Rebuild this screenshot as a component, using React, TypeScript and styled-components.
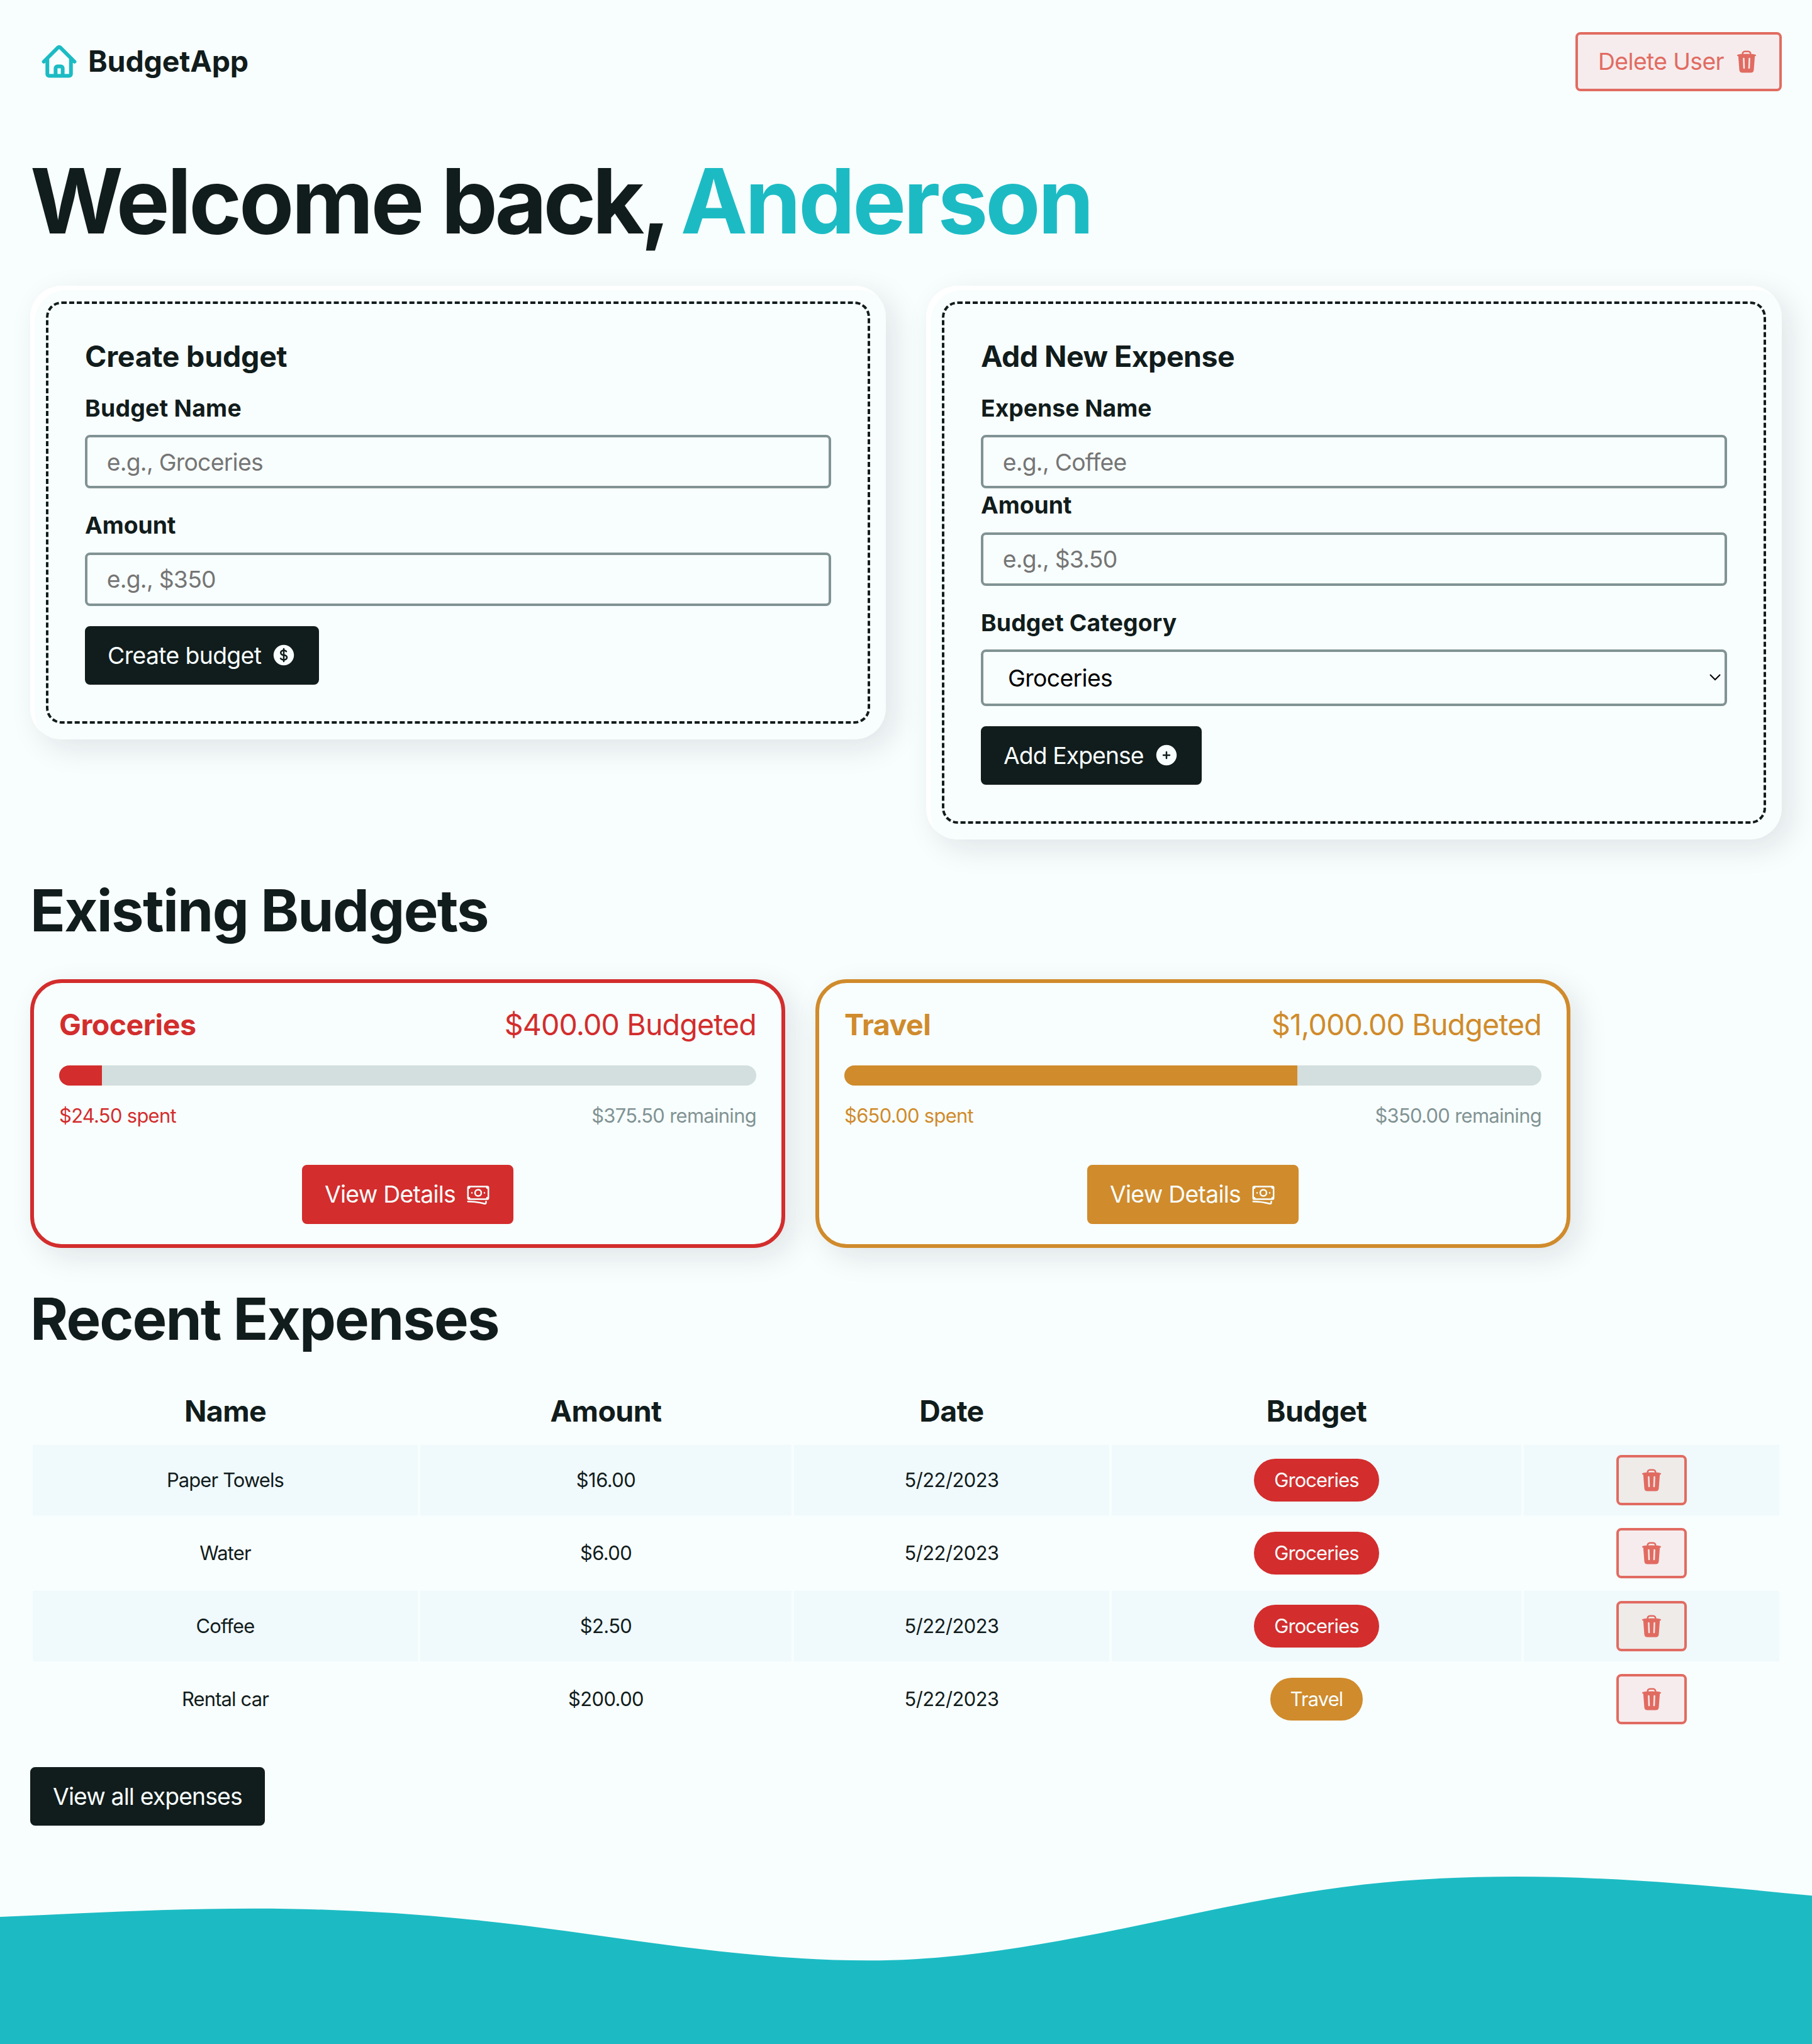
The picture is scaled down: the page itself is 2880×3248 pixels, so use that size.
import React from "react";
import styled, { createGlobalStyle, css } from "styled-components";
import { HiTrash, HiCurrencyDollar, HiPlusCircle, HiOutlineBanknotes } from "react-icons/hi2";

const theme = {
  bg: "#f8fefd",
  text: "#111c1c",
  accent: "#1cbbc4",
  muted: "#819394",
  track: "#d3dede",
  tint: "#f0f9fc",
  warning: "#e16b61",
  warningBg: "#f6eced",
  warningBgTinted: "#eeebe9",
  red: "#d32d2d",
  orange: "#d08b2c",
  shadow: "14px 14px 48px rgba(20, 10, 50, 0.105)",
};

const GlobalStyle = createGlobalStyle`
  *, *::before, *::after { box-sizing: border-box; }
  body {
    margin: 0;
    background: ${theme.bg};
    color: ${theme.text};
    font-family: Inter, "Liberation Sans", sans-serif;
    font-size: 37.3px;
    line-height: 57.6px;
  }
  h1, h2, h3, p { margin: 0; }
  svg { display: block; flex: none; }
`;

const Page = styled.div`
  display: flex;
  flex-direction: column;
  min-height: 3248px;
`;

const Main = styled.main`
  display: flex;
  flex-direction: column;
  padding: 51px 48px 0;
`;

const Nav = styled.nav`
  display: flex;
  align-items: center;
  justify-content: space-between;
`;

const Brand = styled.a`
  display: flex;
  align-items: center;
  gap: 16px;
  padding-left: 16px;
  font-size: 46.5px;
  font-weight: 700;
  letter-spacing: -0.0035em;
`;

const buttonBase = css<{ $spacing?: number }>`
  display: inline-flex;
  align-items: center;
  justify-content: center;
  gap: 16px;
  padding: 14px 32px;
  border: 4px solid transparent;
  border-radius: 8px;
  font: inherit;
  line-height: 57.6px;
  letter-spacing: ${(p) => p.$spacing ?? -0.0165}em;
  white-space: nowrap;
`;

const Button = styled.button<{ $color?: string; $spacing?: number }>`
  ${buttonBase}
  align-self: flex-start;
  background: ${(p) => p.$color ?? theme.text};
  border-color: ${(p) => p.$color ?? theme.text};
  color: ${theme.bg};
`;

const WarningButton = styled.button<{ $compact?: boolean; $spacing?: number }>`
  ${buttonBase}
  background: ${theme.warningBg};
  border-color: ${theme.warning};
  color: ${theme.warning};
  ${(p) => p.$compact && css`
    padding: 16px 32px;
    line-height: 40px;
    vertical-align: middle;
  `}
`;

const Welcome = styled.h1`
  margin: 94px 0 55px;
  font-size: 142.6px;
  line-height: 160px;
  letter-spacing: -0.0285em;
  word-spacing: 1px;
`;

const TightWord = styled.span`
  letter-spacing: -0.041em;
  word-spacing: -2px;
`;

const Accent = styled.span`
  letter-spacing: -0.0273em;
  color: ${theme.accent};
`;

const FormGrid = styled.section`
  display: grid;
  grid-template-columns: 1fr 1fr;
  align-items: start;
  gap: 64px;
`;

const FormCard = styled.div`
  padding: 87px;
  border-radius: 50px;
  background: ${theme.bg};
  box-shadow: inset 7px 7px 0 #fff, ${theme.shadow};
  outline: 4px dashed ${theme.text};
  outline-offset: -29px;
`;

const CardTitle = styled.h2<{ $spacing: number }>`
  margin-bottom: 31px;
  font-size: 46.5px;
  line-height: 50px;
  letter-spacing: ${(p) => p.$spacing}em;
`;

const Form = styled.form`
  display: flex;
  flex-direction: column;
  gap: 32px;
`;

const FieldStack = styled.div`
  display: flex;
  flex-direction: column;
`;

const Label = styled.label<{ $spacing?: number }>`
  margin-bottom: 15px;
  font-weight: 700;
  line-height: 54.5px;
  letter-spacing: ${(p) => p.$spacing ?? 0.004}em;
`;

const Input = styled.input`
  width: 100%;
  height: 85px;
  padding: 1px 30.7px 0;
  border: 4px solid ${theme.muted};
  border-radius: 8px;
  background: transparent;
  font: inherit;
  letter-spacing: -0.0195em;
  &::placeholder { color: #757575; opacity: 1; }
`;

const SelectBox = styled.div`
  display: grid;
  align-items: center;
  > * { grid-area: 1 / 1; }
  > svg { justify-self: end; margin: 0 9px 2px 0; pointer-events: none; }
`;

const Select = styled.select`
  appearance: none;
  width: 100%;
  height: 89.5px;
  padding: 1px 39px 0;
  border: 4px solid ${theme.muted};
  border-radius: 8px;
  background: transparent;
  color: #000;
  font: inherit;
  letter-spacing: -0.0168em;
`;

const SectionTitle = styled.h2<{ $gap: number; $spacing: number }>`
  margin: 60px 0 ${(p) => p.$gap}px;
  font-size: 92px;
  line-height: 106px;
  letter-spacing: ${(p) => p.$spacing}em;
`;

const Budgets = styled.section`
  display: flex;
  gap: 48px;
`;

const BudgetCard = styled.article<{ $color: string }>`
  display: flex;
  flex-direction: column;
  width: 1200px;
  padding: 30px 40px 32.4px;
  border: 6px solid ${(p) => p.$color};
  border-radius: 50px;
  background: ${theme.bg};
  box-shadow: ${theme.shadow};
  color: ${(p) => p.$color};
  > button { align-self: center; margin-top: 54px; }
`;

const BudgetHead = styled.div`
  display: flex;
  justify-content: space-between;
  font-size: 46.5px;
  line-height: 72px;
`;

const BudgetName = styled.h3`
  font-size: inherit;
  letter-spacing: -0.0105em;
`;

const BudgetAmount = styled.p`
  letter-spacing: -0.018em;
`;

const Track = styled.div`
  height: 32px;
  margin: 29px 0 24px;
  border-radius: 16px;
  background: ${theme.track};
  overflow: hidden;
`;

const Fill = styled.div<{ $color: string }>`
  height: 100%;
  background: ${(p) => p.$color};
`;

const BudgetFoot = styled.div`
  display: flex;
  justify-content: space-between;
  font-size: 30.9px;
  line-height: 48px;
  letter-spacing: -0.022em;
`;

const Remaining = styled.span`
  color: ${theme.muted};
`;

const Table = styled.table`
  width: 2784px;
  table-layout: fixed;
  border-collapse: separate;
  border-spacing: 4px;
  margin-bottom: 48px;
  text-align: center;
`;

const HeadCell = styled.th<{ $width: number }>`
  width: ${(p) => p.$width}px;
  height: 98px;
  padding: 1px 0 0;
  font-size: 46.5px;
  letter-spacing: -0.013em;
`;

const Row = styled.tr`
  &:nth-child(odd) { background: ${theme.tint}; }
  &:nth-child(odd) ${WarningButton} { background: ${theme.warningBgTinted}; }
`;

const Cell = styled.td`
  height: 112px;
  padding: 0;
  font-size: 30.9px;
  line-height: 48px;
  letter-spacing: -0.0275em;
  vertical-align: middle;
`;

const NumberCell = styled(Cell)`
  letter-spacing: -0.018em;
`;

const Pill = styled.a<{ $color: string }>`
  display: inline-flex;
  align-items: center;
  height: 68px;
  padding: 0 32px;
  border-radius: 34px;
  background: ${(p) => p.$color};
  color: ${theme.bg};
  vertical-align: middle;
`;

const Footer = styled.footer`
  margin-top: auto;
  height: 268px;
`;

const HomeIcon = () => (
  <svg width="60" height="60" viewBox="0 0 24 24" fill="none" stroke={theme.accent} strokeWidth="2.4" strokeLinecap="round" strokeLinejoin="round">
    <path d="m2.25 12 8.954-8.955c.44-.439 1.152-.439 1.591 0L21.75 12M4.5 9.75v10.125c0 .621.504 1.125 1.125 1.125H9.75v-4.875c0-.621.504-1.125 1.125-1.125h2.25c.621 0 1.125.504 1.125 1.125V21h4.125c.621 0 1.125-.504 1.125-1.125V9.75M8.25 21h8.25" />
  </svg>
);

const Chevron = () => (
  <svg width="20" height="14" viewBox="0 0 20 14" fill="none" stroke="#000" strokeWidth="2">
    <path d="M2 3l8 8 8-8" />
  </svg>
);

// Knots of the footer wave: x, y and the slope of the curve there.
const crest: [number, number, number][] = [
  [0, 66, -0.043],
  [404, 52.7, 0],
  [900, 88.5, 0.14],
  [1381, 135.3, 0],
  [1855, 70, -0.21],
  [2168, 14.5, -0.112],
  [2410, 2, 0],
  [2880, 32.3, 0.1],
];

const wavePath = () => {
  let d = `M0 ${crest[0][1]}`;
  for (let i = 1; i < crest.length; i++) {
    const [x0, y0, s0] = crest[i - 1];
    const [x1, y1, s1] = crest[i];
    const h = (x1 - x0) / 3;
    d += `C${x0 + h} ${y0 + s0 * h} ${x1 - h} ${y1 - s1 * h} ${x1} ${y1}`;
  }
  return `${d}V268H0Z`;
};

const budgets = [
  { name: "Groceries", color: theme.red, total: "$400.00", spent: "$24.50", left: "$375.50", ratio: 0.06125 },
  { name: "Travel", color: theme.orange, total: "$1,000.00", spent: "$650.00", left: "$350.00", ratio: 0.65 },
];

const expenses = [
  { name: "Paper Towels", amount: "$16.00", budget: "Groceries" },
  { name: "Water", amount: "$6.00", budget: "Groceries" },
  { name: "Coffee", amount: "$2.50", budget: "Groceries" },
  { name: "Rental car", amount: "$200.00", budget: "Travel" },
];

const columns: [string, number][] = [["Name", 612], ["Amount", 590], ["Date", 501], ["Budget", 651], ["", 406]];

export default function App() {
  return (
    <Page>
      <GlobalStyle />
      <Main>
        <Nav>
          <Brand><HomeIcon /><span>BudgetApp</span></Brand>
          <WarningButton type="button"><span>Delete User</span><HiTrash size={40} /></WarningButton>
        </Nav>
        <Welcome>Welcome <TightWord>back, </TightWord><Accent>Anderson</Accent></Welcome>
        <FormGrid>
          <FormCard>
            <CardTitle $spacing={-0.0048}>Create budget</CardTitle>
            <Form>
              <FieldStack>
                <Label $spacing={0.007}>Budget Name</Label>
                <Input placeholder="e.g., Groceries" />
              </FieldStack>
              <FieldStack>
                <Label $spacing={-0.002}>Amount</Label>
                <Input placeholder="e.g., $350" />
              </FieldStack>
              <Button type="button"><span>Create budget</span><HiCurrencyDollar size={40} /></Button>
            </Form>
          </FormCard>
          <FormCard>
            <CardTitle $spacing={-0.0117}>Add New Expense</CardTitle>
            <Form>
              <FieldStack>
                <Label $spacing={0}>Expense Name</Label>
                <Input placeholder="e.g., Coffee" />
                <Label $spacing={-0.002}>Amount</Label>
                <Input placeholder="e.g., $3.50" />
              </FieldStack>
              <FieldStack>
                <Label>Budget Category</Label>
                <SelectBox>
                  <Select defaultValue="Groceries">
                    <option>Groceries</option>
                    <option>Travel</option>
                  </Select>
                  <Chevron />
                </SelectBox>
              </FieldStack>
              <Button type="button" $spacing={-0.0245}><span>Add Expense</span><HiPlusCircle size={40} /></Button>
            </Form>
          </FormCard>
        </FormGrid>
        <SectionTitle $gap={56} $spacing={-0.0185}>Existing Budgets</SectionTitle>
        <Budgets>
          {budgets.map((b) => (
            <BudgetCard key={b.name} $color={b.color}>
              <BudgetHead>
                <BudgetName>{b.name}</BudgetName>
                <BudgetAmount>{b.total} Budgeted</BudgetAmount>
              </BudgetHead>
              <Track><Fill $color={b.color} style={{ width: `${b.ratio * 100}%` }} /></Track>
              <BudgetFoot>
                <span>{b.spent} spent</span>
                <Remaining>{b.left} remaining</Remaining>
              </BudgetFoot>
              <Button type="button" $color={b.color} $spacing={-0.019}><span>View Details</span><HiOutlineBanknotes size={40} /></Button>
            </BudgetCard>
          ))}
        </Budgets>
        <SectionTitle $gap={40.4} $spacing={-0.0206}>Recent Expenses</SectionTitle>
        <Table>
          <thead>
            <tr>{columns.map(([name, width]) => <HeadCell key={name} $width={width}>{name}</HeadCell>)}</tr>
          </thead>
          <tbody>
            {expenses.map((e) => (
              <Row key={e.name}>
                <Cell>{e.name}</Cell>
                <NumberCell>{e.amount}</NumberCell>
                <NumberCell>5/22/2023</NumberCell>
                <Cell><Pill $color={e.budget === "Travel" ? theme.orange : theme.red}>{e.budget}</Pill></Cell>
                <Cell><WarningButton type="button" $compact><HiTrash size={40} /></WarningButton></Cell>
              </Row>
            ))}
          </tbody>
        </Table>
        <Button type="button" $spacing={-0.0229}>View all expenses</Button>
      </Main>
      <Footer>
        <svg width="2880" height="268" viewBox="0 0 2880 268"><path d={wavePath()} fill={theme.accent} /></svg>
      </Footer>
    </Page>
  );
}
